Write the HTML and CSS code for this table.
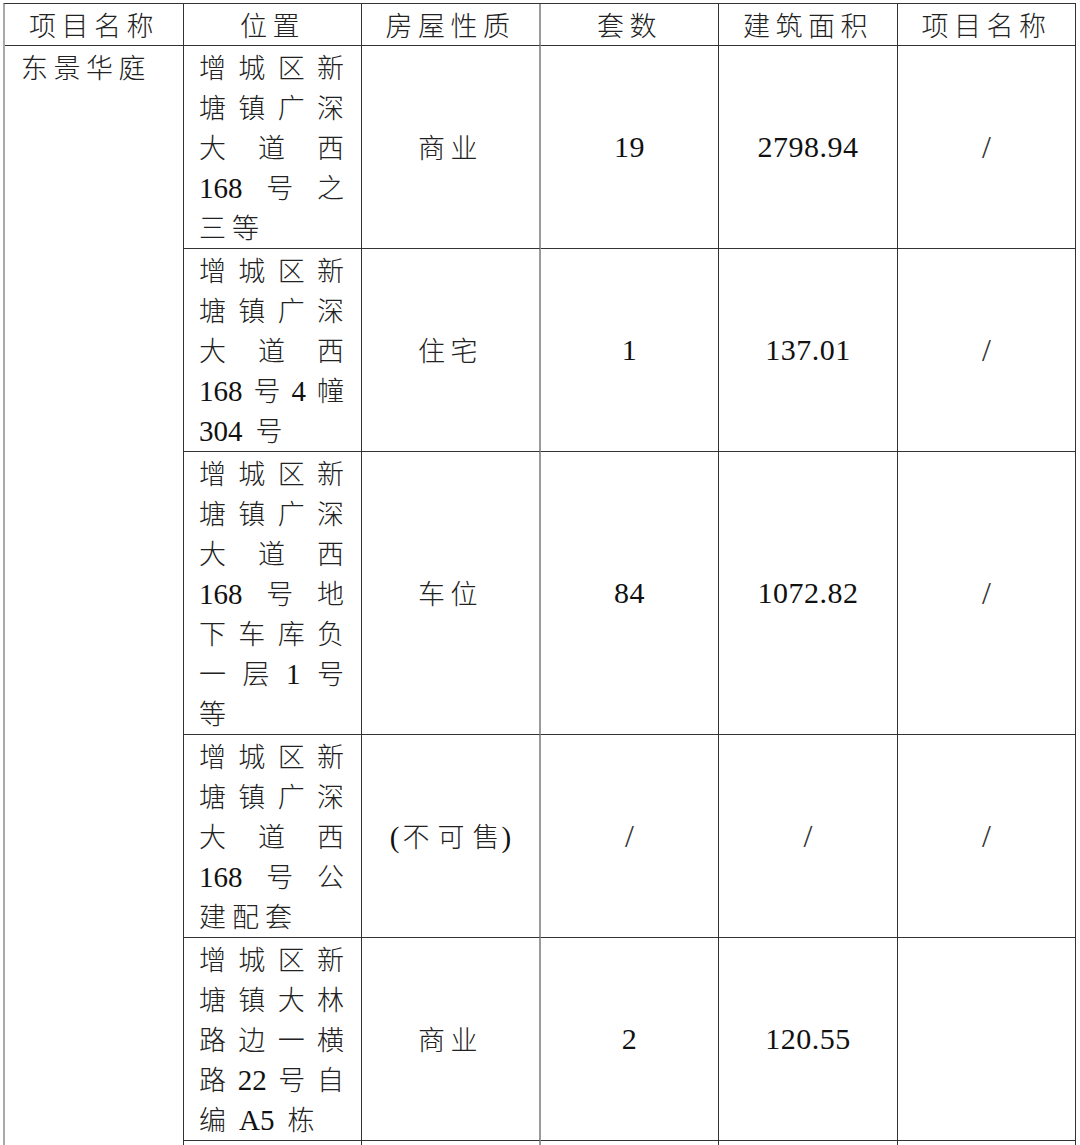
FILE: index.html
```html
<!DOCTYPE html>
<html lang="zh-CN">
<head>
<meta charset="utf-8">
<title>项目列表</title>
<link rel="stylesheet" href="styles.css">
</head>
<body>
<table class="sheet">
  <colgroup>
    <col class="w179"><col class="w178"><col class="w179"><col class="w178"><col class="w179"><col class="w178">
  </colgroup>
  <thead>
    <tr>
      <th>项目名称</th>
      <th>位置</th>
      <th class="c3">房屋性质</th>
      <th>套数</th>
      <th>建筑面积</th>
      <th>项目名称</th>
    </tr>
  </thead>
  <tbody>
    <tr>
      <td class="name" rowspan="6">东景华庭</td>
      <td class="loc">
        <div class="ln j"><span>增</span><span>城</span><span>区</span><span>新</span></div>
        <div class="ln j"><span>塘</span><span>镇</span><span>广</span><span>深</span></div>
        <div class="ln j"><span>大</span><span>道</span><span>西</span></div>
        <div class="ln j"><span class="n">168</span><span>号</span><span>之</span></div>
        <div class="ln last"><span>三</span><span>等</span></div>
      </td>
      <td class="c3">商业</td>
      <td class="num">19</td>
      <td class="num">2798.94</td>
      <td class="num slash">/</td>
    </tr>
    <tr>
      <td class="loc">
        <div class="ln j"><span>增</span><span>城</span><span>区</span><span>新</span></div>
        <div class="ln j"><span>塘</span><span>镇</span><span>广</span><span>深</span></div>
        <div class="ln j"><span>大</span><span>道</span><span>西</span></div>
        <div class="ln j"><span class="n">168</span><span>号</span><span class="n">4</span><span>幢</span></div>
        <div class="ln last"><span class="n">304</span><span>号</span></div>
      </td>
      <td class="c3">住宅</td>
      <td class="num">1</td>
      <td class="num">137.01</td>
      <td class="num slash">/</td>
    </tr>
    <tr>
      <td class="loc">
        <div class="ln j"><span>增</span><span>城</span><span>区</span><span>新</span></div>
        <div class="ln j"><span>塘</span><span>镇</span><span>广</span><span>深</span></div>
        <div class="ln j"><span>大</span><span>道</span><span>西</span></div>
        <div class="ln j"><span class="n">168</span><span>号</span><span>地</span></div>
        <div class="ln j"><span>下</span><span>车</span><span>库</span><span>负</span></div>
        <div class="ln j"><span>一</span><span>层</span><span class="n">1</span><span>号</span></div>
        <div class="ln last"><span>等</span></div>
      </td>
      <td class="c3">车位</td>
      <td class="num">84</td>
      <td class="num">1072.82</td>
      <td class="num slash">/</td>
    </tr>
    <tr>
      <td class="loc">
        <div class="ln j"><span>增</span><span>城</span><span>区</span><span>新</span></div>
        <div class="ln j"><span>塘</span><span>镇</span><span>广</span><span>深</span></div>
        <div class="ln j"><span>大</span><span>道</span><span>西</span></div>
        <div class="ln j"><span class="n">168</span><span>号</span><span>公</span></div>
        <div class="ln last"><span>建</span><span>配</span><span>套</span></div>
      </td>
      <td class="c3 paren"><span class="p">(</span><span class="sp">不可</span><span class="end">售</span><span class="p">)</span></td>
      <td class="num slash">/</td>
      <td class="num slash">/</td>
      <td class="num slash">/</td>
    </tr>
    <tr>
      <td class="loc">
        <div class="ln j"><span>增</span><span>城</span><span>区</span><span>新</span></div>
        <div class="ln j"><span>塘</span><span>镇</span><span>大</span><span>林</span></div>
        <div class="ln j"><span>路</span><span>边</span><span>一</span><span>横</span></div>
        <div class="ln j"><span>路</span><span class="n">22</span><span>号</span><span>自</span></div>
        <div class="ln last"><span>编</span><span class="n">A5</span><span>栋</span></div>
      </td>
      <td class="c3">商业</td>
      <td class="num">2</td>
      <td class="num">120.55</td>
      <td class="num"></td>
    </tr>
    <tr class="tail">
      <td class="loc"></td>
      <td class="c3"></td>
      <td></td>
      <td></td>
      <td></td>
    </tr>
  </tbody>
</table>
</body>
</html>
```

FILE: styles.css
```css
html, body {
  margin: 0;
  padding: 0;
  background: #ffffff;
}

.sheet {
  border-collapse: separate;
  border-spacing: 0;
  table-layout: fixed;
  width: 1073px;
  margin: 3px 0 0 3px;
  border-left: 2px solid #a9a9a9;
  border-top: 1px solid #333333;
  font-family: "Noto Sans CJK SC", "Noto Sans", sans-serif;
  color: #222222;
}

.w179 { width: 179px; }
.w178 { width: 178px; }

.sheet th,
.sheet td {
  border-right: 1px solid #333333;
  border-bottom: 1px solid #333333;
  padding: 1px 0;
  font-size: 27px;
  font-weight: 300;
  line-height: 40px;
  letter-spacing: 5.5px;
  text-align: center;
  vertical-align: middle;
  white-space: nowrap;
}

.sheet th {
  padding: 0;
  line-height: 41px;
}

.sheet .c3 {
  border-right: 2px solid #9a9a9a;
}

.sheet td.name {
  text-align: left;
  vertical-align: top;
  padding-left: 16px;
}

.sheet td.loc {
  padding: 1px 17px 1px 15px;
  letter-spacing: 0;
  text-align: left;
  vertical-align: top;
}

.ln {
  display: flex;
  align-items: baseline;
  height: 40px;
}

.ln.j {
  justify-content: space-between;
}

.ln.last {
  justify-content: flex-start;
  gap: 6px;
}

.ln.last .n {
  margin: 0 7px;
}

.ln.last .n:first-child {
  margin-left: 0;
}

.n {
  font-family: "Liberation Serif", serif;
  font-size: 29px;
  font-weight: 400;
  color: #111111;
}

.sheet td.num {
  font-family: "Liberation Serif", serif;
  font-size: 30px;
  font-weight: 400;
  letter-spacing: 0.5px;
  color: #111111;
}

.sheet td.slash {
  font-size: 32px;
  letter-spacing: 0;
  color: #333333;
}

.sheet td.paren {
  letter-spacing: 0;
}

.paren .sp {
  letter-spacing: 8px;
}

.paren .end {
  letter-spacing: 2px;
}

.p {
  font-family: "Liberation Serif", serif;
  font-size: 29px;
  color: #111111;
}

.p:first-child {
  letter-spacing: 3px;
}

.tail td {
  height: 40px;
}
```
